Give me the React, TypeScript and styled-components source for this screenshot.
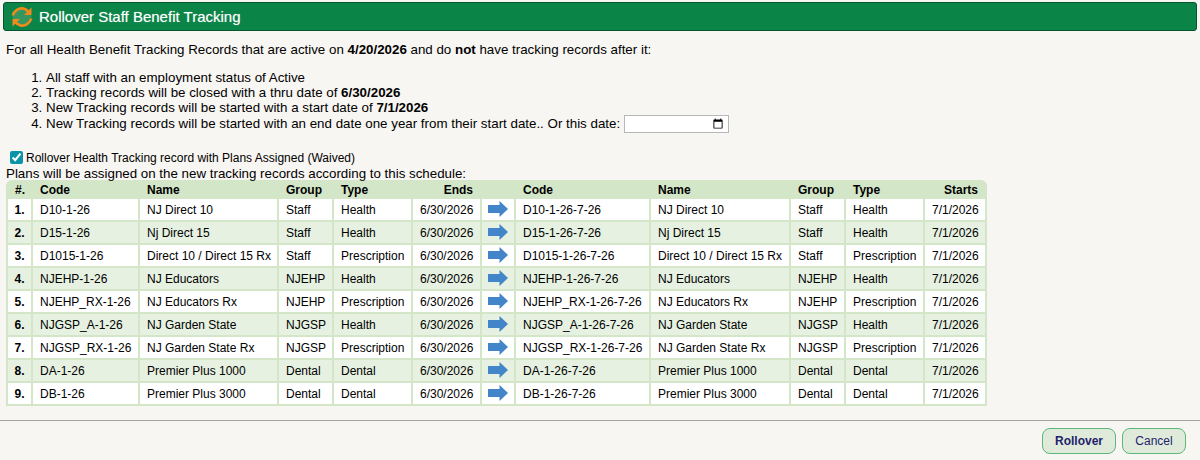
import React from "react";
import styled, { createGlobalStyle } from "styled-components";

const GlobalStyle = createGlobalStyle`
  html, body {
    margin: 0;
    padding: 0;
    background: #f8f6f2;
    font-family: "Liberation Sans", Arial, sans-serif;
    font-size: 13.33px;
    color: #000;
  }
`;

const Page = styled.div`
  width: 1200px;
  height: 460px;
  display: flex;
  flex-direction: column;
  overflow: hidden;
`;

const TitleBar = styled.div`
  margin: 2px 3px 0;
  height: 29px;
  box-sizing: border-box;
  display: flex;
  align-items: center;
  gap: 6px;
  padding-left: 7px;
  background: #0b8447;
  border: 1px solid #06552c;
  border-radius: 3px;
  color: #fff;
  font-size: 15px;
  text-shadow: 0 0 1px rgba(255, 255, 255, 0.45);
`;

const Content = styled.div`
  flex: 1;
  padding: 0 6px;
`;

const Intro = styled.p`
  margin: 11px 0 0;
  line-height: 15px;
`;

const Steps = styled.ol`
  margin: 13px 0 0;
  padding-left: 40px;
  line-height: 15px;
`;

const DateInput = styled.input`
  width: 105px;
  height: 18px;
  box-sizing: border-box;
  margin: 0;
  padding: 0 2px;
  border: 1px solid #b8b8b8;
  background: #fff;
  font-size: 12px;
  font-family: inherit;
  vertical-align: middle;

  &::-webkit-datetime-edit {
    visibility: hidden;
  }
`;

const WaiveLabel = styled.label`
  display: flex;
  align-items: center;
  gap: 3px;
  margin: 17px 0 0 4px;
  height: 15px;
  font-size: 12px;
`;

const Check = styled.input`
  width: 13px;
  height: 13px;
  margin: 0;
  accent-color: #0b94a8;
`;

const ScheduleNote = styled.div`
  margin-top: 2px;
  line-height: 13px;
`;

const Schedule = styled.table`
  border-collapse: separate;
  border-spacing: 2px;
  background: #d3e6c7;
  border-radius: 6px 6px 0 0;
  table-layout: fixed;
  width: 981px;
  font-size: 12px;
`;

const HeadCell = styled.th<{ $right?: boolean }>`
  height: 15px;
  padding: 0 7px;
  line-height: 14px;
  text-align: ${(p) => (p.$right ? "right" : "left")};
  font-weight: bold;
  white-space: nowrap;
`;

const Row = styled.tr<{ $odd: boolean }>`
  background: ${(p) => (p.$odd ? "#ffffff" : "#e6f1e1")};
`;

const Cell = styled.td<{ $right?: boolean }>`
  height: 21px;
  padding: 0 7px;
  box-sizing: border-box;
  text-align: ${(p) => (p.$right ? "right" : "left")};
  white-space: nowrap;
  overflow: hidden;
`;

const NumCell = styled(Cell)`
  font-weight: bold;
  text-align: center;
  padding: 0;
`;

const ArrowCell = styled(Cell)`
  padding: 0 0 2px;
  text-align: center;
  line-height: 0;
`;

const Footer = styled.div`
  height: 40px;
  box-sizing: border-box;
  border-top: 1px solid #a3a3a3;
  display: flex;
  justify-content: flex-end;
  align-items: flex-start;
  gap: 6px;
  padding: 7px 14px 0 0;
`;

const Button = styled.button<{ $primary?: boolean }>`
  height: 26px;
  box-sizing: border-box;
  padding: 0;
  width: ${(p) => (p.$primary ? "74px" : "64px")};
  border: 1px solid #5cb878;
  border-radius: 8px;
  background: #e0eadb;
  color: #231f6b;
  font-family: inherit;
  font-size: 12px;
  font-weight: ${(p) => (p.$primary ? "bold" : "normal")};
`;

const RolloverIcon = () => (
  <svg width="22" height="22" viewBox="0 0 22 22" fill="none">
    <circle cx="11" cy="11" r="9.500" fill="#5fa878" opacity="0.5" />
    <path d="M1.800 9.500C3 4.500 8 1.600 12.500 2.600c2 .5 3.500 1.500 4.700 3" stroke="#ef8a1d" strokeWidth="2.600" />
    <path d="M20.500 1.500v7.500H13z" fill="#ef8a1d" />
    <path d="M20.200 12.500C19 17.500 14 20.400 9.500 19.400c-2-.5-3.500-1.500-4.700-3" stroke="#ef8a1d" strokeWidth="2.600" />
    <path d="M1.500 20.500V13H9z" fill="#ef8a1d" />
  </svg>
);

const ArrowIcon = () => (
  <svg width="20" height="16" viewBox="0 0 20 16">
    <path d="M0 4h11.500V0L20 8l-8.500 8v-4H0z" fill="#4285c8" />
  </svg>
);

const plans = [
  ["D10-1-26", "NJ Direct 10", "Staff", "Health"],
  ["D15-1-26", "Nj Direct 15", "Staff", "Health"],
  ["D1015-1-26", "Direct 10 / Direct 15 Rx", "Staff", "Prescription"],
  ["NJEHP-1-26", "NJ Educators", "NJEHP", "Health"],
  ["NJEHP_RX-1-26", "NJ Educators Rx", "NJEHP", "Prescription"],
  ["NJGSP_A-1-26", "NJ Garden State", "NJGSP", "Health"],
  ["NJGSP_RX-1-26", "NJ Garden State Rx", "NJGSP", "Prescription"],
  ["DA-1-26", "Premier Plus 1000", "Dental", "Dental"],
  ["DB-1-26", "Premier Plus 3000", "Dental", "Dental"],
];

const columnWidths = [23, 105, 137, 53, 77, 67, 32, 133, 138, 53, 77, 60];

export default function App() {
  return (
    <Page>
      <GlobalStyle />
      <TitleBar>
        <RolloverIcon />
        Rollover Staff Benefit Tracking
      </TitleBar>
      <Content>
        <Intro>
          For all Health Benefit Tracking Records that are active on <b>4/20/2026</b> and do <b>not</b> have tracking
          records after it:
        </Intro>
        <Steps>
          <li>All staff with an employment status of Active</li>
          <li>
            Tracking records will be closed with a thru date of <b>6/30/2026</b>
          </li>
          <li>
            New Tracking records will be started with a start date of <b>7/1/2026</b>
          </li>
          <li>
            New Tracking records will be started with an end date one year from their start date.. Or this date:{" "}
            <DateInput type="date" />
          </li>
        </Steps>
        <WaiveLabel>
          <Check type="checkbox" defaultChecked />
          Rollover Health Tracking record with Plans Assigned (Waived)
        </WaiveLabel>
        <ScheduleNote>Plans will be assigned on the new tracking records according to this schedule:</ScheduleNote>
        <Schedule>
          <colgroup>
            {columnWidths.map((w, i) => (
              <col key={i} width={w} />
            ))}
          </colgroup>
          <thead>
            <tr>
              <HeadCell>#.</HeadCell>
              <HeadCell>Code</HeadCell>
              <HeadCell>Name</HeadCell>
              <HeadCell>Group</HeadCell>
              <HeadCell>Type</HeadCell>
              <HeadCell $right>Ends</HeadCell>
              <HeadCell />
              <HeadCell>Code</HeadCell>
              <HeadCell>Name</HeadCell>
              <HeadCell>Group</HeadCell>
              <HeadCell>Type</HeadCell>
              <HeadCell $right>Starts</HeadCell>
            </tr>
          </thead>
          <tbody>
            {plans.map(([code, name, group, type], i) => (
              <Row key={code} $odd={i % 2 === 0}>
                <NumCell>{i + 1}.</NumCell>
                <Cell>{code}</Cell>
                <Cell>{name}</Cell>
                <Cell>{group}</Cell>
                <Cell>{type}</Cell>
                <Cell $right>6/30/2026</Cell>
                <ArrowCell>
                  <ArrowIcon />
                </ArrowCell>
                <Cell>{code}-7-26</Cell>
                <Cell>{name}</Cell>
                <Cell>{group}</Cell>
                <Cell>{type}</Cell>
                <Cell $right>7/1/2026</Cell>
              </Row>
            ))}
          </tbody>
        </Schedule>
      </Content>
      <Footer>
        <Button $primary>Rollover</Button>
        <Button>Cancel</Button>
      </Footer>
    </Page>
  );
}
